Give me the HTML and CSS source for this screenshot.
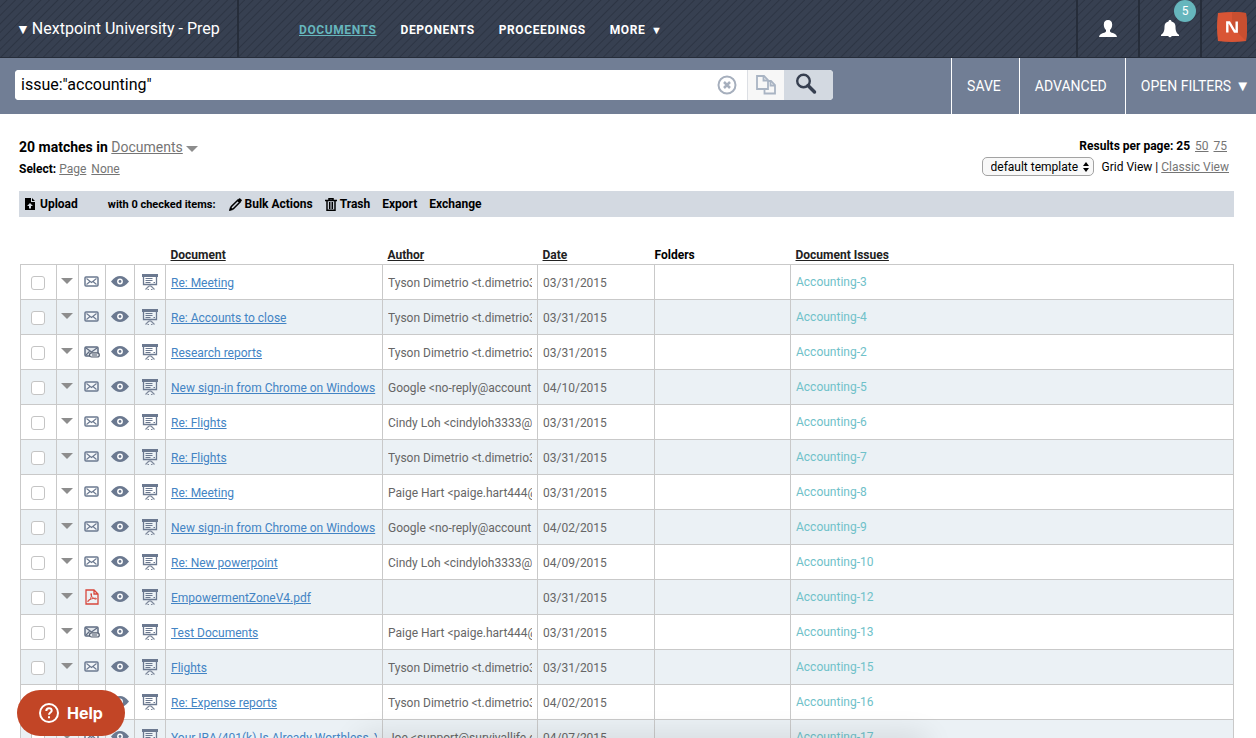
FILE: index.html
```html
<!DOCTYPE html>
<html lang="en">
<head>
  <meta charset="UTF-8">
  <meta name="viewport" content="width=device-width, initial-scale=1.0">
  <title>Nextpoint University - Prep</title>
  <link rel="stylesheet" href="styles.css">
</head>
<body>
  <svg class="sprite" aria-hidden="true">
    <symbol id="i-caret" viewBox="0 0 12 6"><path d="M0 0h12L6 6z"/></symbol>
    <symbol id="i-mail" viewBox="0 0 15 11">
      <rect x="1" y="1" width="13" height="9" rx="1" fill="#fff" fill-opacity=".4" stroke="#6b7990" stroke-width="1.5"/>
      <path d="M2.500 2.500l5 4 5-4M2.500 8.500L6 5.500M12.500 8.500L9 5.500" fill="none" stroke="#6b7990" stroke-width="1.100"/>
    </symbol>
    <symbol id="i-mailclip" viewBox="0 0 16 12">
      <rect x="1" y="1" width="13" height="9" rx="1" fill="#e4e8ed" stroke="#5f6c82" stroke-width="1.500"/>
      <path d="M2 2l5.500 4L13 2M2 9l3.500-3.500" fill="none" stroke="#5f6c82" stroke-width="1.200"/>
      <rect x="5.500" y="6.800" width="9.800" height="4.200" rx="2.100" fill="#e4e8ed" stroke="#555f70" stroke-width="1.200"/>
      <path d="M8 9h5" stroke="#555f70"/>
    </symbol>
    <symbol id="i-pdf" viewBox="0 0 14 16">
      <path d="M1 1h8l4 4v10H1zM9 1v4h4" fill="none" stroke="#d8473c" stroke-width="1.300"/>
      <path d="M3 12.500c2-1 4-5 3.500-7.500-.2-1-1-.5-.7.500.6 2.200 2.700 4.500 5.200 4.700.9 0 .5-1-.5-1-2.500 0-5.500 1-7.500 2.300-.6.500-.5 1.300 0 1z" fill="none" stroke="#d8473c"/>
    </symbol>
    <symbol id="i-eye" viewBox="0 0 18 11">
      <path d="M0 5.500C3 1.500 6 0 9 0s6 1.500 9 5.500C15 9.500 12 11 9 11S3 9.500 0 5.500z" fill="#6b7990"/>
      <circle cx="9" cy="5.500" r="2.900" fill="#fff"/><circle cx="9" cy="5.500" r="1.400" fill="#6b7990"/>
    </symbol>
    <symbol id="i-screen" viewBox="0 0 16 16">
      <path d="M0 0h16v3H0z" fill="#6b7990"/>
      <path d="M1.500 2v8.500h13V2" fill="none" stroke="#6b7990" stroke-width="1.300"/>
      <path d="M3.500 4.500h7M3.500 6.500h7M3.500 8.500h5M11.500 8.500h1.500M8 10.500v2.500" stroke="#6b7990"/>
      <path d="M7 12l-3.500 3.500M9 12l3.500 3.500M7 15.500H5.500M9 15.500h1.500" fill="none" stroke="#7f8a9c" stroke-width="1.200"/>
    </symbol>
  </svg>

  <header class="topbar">
    <a class="brand" href="#"><span class="arrow">▼</span>Nextpoint University - Prep</a>
    <nav class="nav">
      <a class="active" href="#">Documents</a>
      <a href="#">Deponents</a>
      <a href="#">Proceedings</a>
      <a href="#">More <span class="arrow">▼</span></a>
    </nav>
    <button class="top-btn" type="button" aria-label="Account">
      <svg width="18" height="17" viewBox="0 0 18 17"><path d="M9 0c2.600 0 4.200 1.700 4.200 4.500 0 2.300-.9 4.400-2.200 5.400v1.300c0 .8 1 1.200 3 1.900 2.200.8 3.600 1.700 4 3.900H0c.4-2.200 1.800-3.100 4-3.900 2-.7 3-1.100 3-1.900V9.900C5.700 8.900 4.800 6.800 4.800 4.500 4.800 1.700 6.400 0 9 0z" fill="#fff"/></svg>
    </button>
    <button class="top-btn" type="button" aria-label="Notifications">
      <svg width="18" height="18" viewBox="0 0 18 18"><path d="M9 0c.9 0 1.500.6 1.500 1.500 2.700.6 4 2.500 4 5 0 5 1 6.500 3.500 8.300V16h-7.300a1.800 1.800 0 0 1-3.400 0H0v-1.200C2.500 13 3.500 11.500 3.500 6.500c0-2.500 1.300-4.400 4-5C7.500.6 8.100 0 9 0z" fill="#fff"/></svg>
      <span class="badge">5</span>
    </button>
    <a class="top-btn logo" href="#" aria-label="Nextpoint">
      <svg width="30" height="30" viewBox="0 0 30 30"><path d="M1 1q14-2 28 0 2 14 0 28-14 2-28 0Q-1 15 1 1z" fill="#d95535"/><path d="M15 0q8 0 14 1 2 14 0 28L15 15z" fill="#c94f30"/><path d="M10.300 20.500V10.500h2l5.400 9h2V9.500" fill="none" stroke="#fff" stroke-width="2.400"/></svg>
    </a>
  </header>

  <div class="searchbar">
    <form class="search">
      <input type="text" aria-label="Search" value='issue:"accounting"'>
      <button class="clear" type="button" aria-label="Clear">
        <svg width="20" height="20" viewBox="0 0 20 20" fill="none" stroke="#a6afbd"><circle cx="10" cy="10" r="8.500" stroke-width="2"/><path d="M7 7l6 6M13 7l-6 6" stroke-width="2.500"/></svg>
      </button>
      <button class="copy" type="button" aria-label="Copy">
        <svg width="20" height="20" viewBox="0 0 20 20" fill="#f7f7f7" stroke="#a9b4c3" stroke-width="1.800"><path d="M8.500 6H15l4 4v8.500H8.500z"/><path d="M14.500 6v4.500H19" fill="none"/><path d="M1 1h7l4 4v9H1z"/><path d="M7.500 1v4.500H12" fill="none"/></svg>
      </button>
      <button class="go" type="submit" aria-label="Search">
        <svg width="22" height="22" viewBox="0 0 22 22" fill="none" stroke="#363f50"><circle cx="8.500" cy="8" r="6.300" stroke-width="2.400"/><path d="M13 12.500l6.500 6.500" stroke-width="3.500" stroke-linecap="round"/></svg>
      </button>
    </form>
    <div class="search-menu">
      <a href="#">SAVE</a>
      <a href="#">ADVANCED</a>
      <a href="#">OPEN FILTERS <span class="arrow">▼</span></a>
    </div>
  </div>

  <main>
    <div class="summary">
      <div>
        <div class="matches"><b>20 matches in</b> <a href="#">Documents</a> <svg class="caret" width="12" height="6"><use href="#i-caret"/></svg></div>
        <div class="select-row"><b>Select:</b> <a href="#">Page</a> <a href="#">None</a></div>
      </div>
      <div class="options">
        <div class="per-page"><b>Results per page: 25</b> <a href="#">50</a> <a href="#">75</a></div>
        <div class="view-row">
          <span class="template">
            <select aria-label="Template"><option>default template</option></select>
            <svg width="6" height="10" viewBox="0 0 6 10"><path d="M3 0l3 4H0zM3 10l3-4H0z"/></svg>
          </span>
          <span>Grid View | <a href="#">Classic View</a></span>
        </div>
      </div>
    </div>

    <div class="actions">
      <button class="upload" type="button"><svg width="10" height="12" viewBox="0 0 10 12"><path d="M0 0h6v4h4v8H0zM7 0l3 3H7z"/><path d="M5 5L2 8h2v2.500h2V8h2z" fill="#d3d9e1"/></svg>Upload</button>
      <span class="checked">with 0 checked items:</span>
      <button type="button"><svg width="13" height="13" viewBox="0 0 13 13"><path d="M1.500 11.500l.7-2.800L8.700 2.200l2.100 2.100-6.500 6.500z" fill="none" stroke="#000" stroke-width="1.500"/><path d="M8 2.500L10 .4q.6-.5 1.200 0l1.400 1.400q.5.600 0 1.200L10.500 5zM0 13l1-4 3 3z"/></svg>Bulk Actions</button>
      <button type="button"><svg width="12" height="13" viewBox="0 0 12 13" fill="none" stroke="#000" stroke-width="1.500"><path d="M0 2.500h12M4 2.500V.8h4v1.700M2 3v9.200h8V3M4.700 4v7M7.300 4v7"/></svg>Trash</button>
      <button type="button">Export</button>
      <button type="button">Exchange</button>
    </div>

    <table class="grid">
      <colgroup>
        <col class="c-check"><col class="c-menu"><col class="c-type"><col class="c-eye"><col class="c-screen">
        <col class="c-doc"><col class="c-author"><col class="c-date"><col class="c-folders"><col>
      </colgroup>
      <thead>
        <tr>
          <th colspan="5"></th>
          <th><a href="#">Document</a></th>
          <th><a href="#">Author</a></th>
          <th><a href="#">Date</a></th>
          <th class="folders">Folders</th>
          <th><a href="#">Document Issues</a></th>
        </tr>
      </thead>
      <tbody id="rows"></tbody>
    </table>
  </main>

  <div class="bottom-shadow"></div>
  <button class="help" type="button">
    <svg width="20" height="20" viewBox="0 0 20 20" fill="none" stroke="#fff" stroke-width="2"><circle cx="10" cy="10" r="9"/><path d="M7.300 8c0-1.700 1.200-2.700 2.700-2.700s2.700 1 2.700 2.400c0 1.800-2.700 2-2.700 4"/><path d="M10 13.200v2"/></svg>
    Help
  </button>

  <script>
    const tyson = "Tyson Dimetrio <t.dimetrio3";
    const paige = "Paige Hart <paige.hart444@";
    const cindy = "Cindy Loh <cindyloh3333@";
    const google = "Google <no-reply@account";

    // type, title, author, date, issue
    const docs = [
      ["mail", "Re: Meeting", tyson, "03/31/2015", "Accounting-3"],
      ["mail", "Re: Accounts to close", tyson, "03/31/2015", "Accounting-4"],
      ["mailclip", "Research reports", tyson, "03/31/2015", "Accounting-2"],
      ["mail", "New sign-in from Chrome on Windows", google, "04/10/2015", "Accounting-5"],
      ["mail", "Re: Flights", cindy, "03/31/2015", "Accounting-6"],
      ["mail", "Re: Flights", tyson, "03/31/2015", "Accounting-7"],
      ["mail", "Re: Meeting", paige, "03/31/2015", "Accounting-8"],
      ["mail", "New sign-in from Chrome on Windows", google, "04/02/2015", "Accounting-9"],
      ["mail", "Re: New powerpoint", cindy, "04/09/2015", "Accounting-10"],
      ["pdf", "EmpowermentZoneV4.pdf", "", "03/31/2015", "Accounting-12"],
      ["mailclip", "Test Documents", paige, "03/31/2015", "Accounting-13"],
      ["mail", "Flights", tyson, "03/31/2015", "Accounting-15"],
      ["mail", "Re: Expense reports", tyson, "04/02/2015", "Accounting-16"],
      ["mail", "Your IRA/401(k) Is Already Worthless, Y", "Joe <support@survivallife.c", "04/07/2015", "Accounting-17"]
    ];
    const sizes = { mail: [15, 11], mailclip: [16, 12], pdf: [14, 16], eye: [18, 11], screen: [16, 16], caret: [12, 6] };

    function icon(name) {
      const [w, h] = sizes[name];
      return `<svg class="${name}" width="${w}" height="${h}"><use href="#i-${name}"/></svg>`;
    }

    function esc(text) {
      return text.replace(/</g, "&lt;").replace(/>/g, "&gt;");
    }

    document.getElementById("rows").innerHTML = docs.map(([type, title, author, date, issue]) => `
      <tr>
        <td class="ico check"><input type="checkbox" aria-label="${title}"></td>
        <td class="ico menu">${icon("caret")}</td>
        <td class="ico">${icon(type)}</td>
        <td class="ico">${icon("eye")}</td>
        <td class="ico">${icon("screen")}</td>
        <td><div class="clip"><a href="#">${title}</a></div></td>
        <td><div class="clip">${esc(author)}</div></td>
        <td>${date}</td>
        <td></td>
        <td class="issue">${issue}</td>
      </tr>`).join("");
  </script>
</body>
</html>
```
FILE: styles.css
```css
* {
  box-sizing: border-box;
}
body {
  margin: 0;
  font-family: Roboto, "Liberation Sans", sans-serif;
  font-size: 12px;
  color: #000;
  background: #fff;
}
button {
  font: inherit;
  color: inherit;
  background: none;
  border: none;
  padding: 0;
  cursor: pointer;
}
.sprite {
  display: none;
}
.topbar {
  display: flex;
  height: 58px;
  color: #fff;
  border-bottom: 1px solid #262d3a;
  background: repeating-linear-gradient(135deg, #374051 0, #374051 4px, #2d3544 5px, #374051 6px);
}
.brand {
  display: flex;
  align-items: center;
  gap: 2px;
  width: 239px;
  padding-left: 16px;
  border-right: 2px solid #262d3a;
  color: #fff;
  font-size: 16px;
  text-decoration: none;
}
.brand .arrow {
  font-size: 14px;
}
.nav {
  flex: 1;
  display: flex;
  align-items: center;
  gap: 24px;
  padding: 2px 0 0 60px;
}
.nav a {
  color: #fff;
  font-weight: 700;
  text-transform: uppercase;
  text-decoration: none;
  letter-spacing: 0.05em;
}
.nav a.active {
  color: #66b6bd;
  text-decoration: underline;
}
.nav .arrow {
  font-size: 11px;
  margin-left: 2px;
}
.top-btn {
  position: relative;
  display: flex;
  align-items: center;
  justify-content: center;
  width: 62px;
  border-left: 2px solid #262d3a;
}
.top-btn.logo {
  width: 56px;
  padding: 0 1px 4px 7px;
}
.badge {
  position: absolute;
  top: 0;
  right: 4px;
  width: 22px;
  height: 22px;
  line-height: 23px;
  border-radius: 50%;
  background: #66b6bd;
  text-align: center;
}
.searchbar {
  display: flex;
  justify-content: space-between;
  height: 56px;
  background: #717e95;
}
.search {
  display: flex;
  width: 818px;
  height: 30px;
  margin: 12px 15px;
  border-radius: 4px;
  overflow: hidden;
  background: #fff;
}
.search input {
  flex: 1;
  min-width: 0;
  border: none;
  outline: none;
  padding: 0 6px 2px;
  font: inherit;
  font-size: 16px;
}
.search button {
  display: flex;
  align-items: center;
  justify-content: center;
}
.clear {
  width: 40px;
}
.search .copy {
  width: 37px;
  border-left: 1px solid #dcdfe4;
  background: #f7f7f7;
}
.search .go {
  width: 49px;
  padding: 0 6px 2px 0;
  background: #d3d9e1;
}
.search-menu {
  display: flex;
}
.search-menu a {
  display: flex;
  align-items: center;
  gap: 4px;
  padding: 0 18px 0 15px;
  border-left: 1px solid #fff;
  color: #fff;
  font-size: 14px;
  text-decoration: none;
}
.search-menu a:last-child {
  padding-right: 6px;
}
.search-menu .arrow {
  font-size: 15px;
}
main {
  padding: 23px 22px 0 19px;
}
main a {
  color: #757575;
}
.summary {
  display: flex;
  justify-content: space-between;
}
.matches {
  font-size: 14px;
  line-height: 20px;
}
.caret {
  fill: #8d8d8d;
}
.select-row {
  margin-top: 2px;
  line-height: 20px;
}
.select-row a + a,
.per-page a {
  margin-left: 2px;
}
.options {
  display: flex;
  flex-direction: column;
  align-items: flex-end;
  padding-right: 5px;
}
.per-page {
  line-height: 18px;
  padding: 0 2px 2px 0;
}
.view-row {
  display: flex;
  align-items: center;
  gap: 8px;
}
.template {
  position: relative;
}
.template select {
  display: block;
  appearance: none;
  width: 112px;
  height: 19px;
  padding: 0 8px;
  border: 1px solid #a3a3a3;
  border-radius: 5px;
  background: #f8f8f8;
  font: inherit;
  color: #000;
}
.template svg {
  position: absolute;
  right: 5px;
  top: 5px;
  pointer-events: none;
}
.actions {
  display: flex;
  align-items: center;
  gap: 12px;
  height: 26px;
  margin-top: 12px;
  padding-left: 6px;
  background: #d3d9e1;
  font-weight: 700;
}
.actions button {
  display: flex;
  align-items: center;
  gap: 3px;
  font-weight: 700;
}
.actions .upload {
  margin-right: 18px;
  gap: 5px;
}
.checked {
  margin-right: 1px;
  font-size: 11px;
}
.grid {
  width: calc(100% - 1px);
  margin: 28px 0 0 1px;
  table-layout: fixed;
  border-collapse: collapse;
  color: #666;
}
.c-check { width: 36px; }
.c-menu { width: 22px; }
.c-type { width: 27px; }
.c-eye { width: 29px; }
.c-screen { width: 31px; }
.c-doc { width: 217px; }
.c-author { width: 155px; }
.c-date { width: 117px; }
.c-folders { width: 136px; }
.grid th {
  height: 19px;
  padding: 2px 5px 0;
  text-align: left;
  color: #000;
}
.grid .folders {
  padding-left: 0;
}
.grid th a {
  color: #222;
}
.grid td {
  height: 35px;
  padding: 2px 5px 0;
  border: 1px solid #c9c9c9;
}
.grid tbody tr:nth-child(even) {
  background: #ebf1f5;
}
.grid td a {
  color: #4384c4;
}
.grid .issue {
  padding-top: 0;
  color: #6fc1c9;
}
.clip {
  overflow: hidden;
  white-space: nowrap;
}
.grid .ico {
  padding: 0 1px 0 0;
  text-align: center;
}
.ico svg,
.ico input {
  display: block;
  margin: 0 auto;
}
.grid .check {
  padding-top: 2px;
}
.grid .menu {
  padding-bottom: 2px;
}
.check input {
  appearance: none;
  width: 14px;
  height: 14px;
  border: 1px solid #c4c4c4;
  border-radius: 3px;
  background: #fff;
}
.bottom-shadow {
  position: fixed;
  left: 360px;
  right: 330px;
  bottom: -20px;
  height: 20px;
  box-shadow: 0 0 30px rgba(0, 0, 0, 0.14);
  pointer-events: none;
}
.help {
  position: fixed;
  left: 17px;
  bottom: 2px;
  display: flex;
  align-items: center;
  gap: 8px;
  height: 46px;
  padding: 0 22px;
  border-radius: 23px;
  background: #c24526;
  color: #fff;
  font-family: Inter, sans-serif;
  font-size: 16px;
  font-weight: 700;
}
```
